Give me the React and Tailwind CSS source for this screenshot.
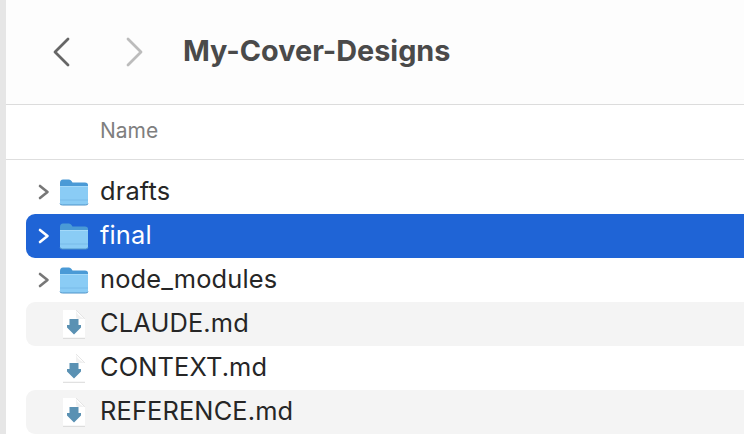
import React from 'react';

const rows = [
  { name: 'drafts', type: 'folder' },
  { name: 'final', type: 'folder', selected: true },
  { name: 'node_modules', type: 'folder' },
  { name: 'CLAUDE.md', type: 'file', striped: true },
  { name: 'CONTEXT.md', type: 'file' },
  { name: 'REFERENCE.md', type: 'file', striped: true },
];

const Chevron = ({ dir, className }) => (
  <svg viewBox="0 0 26 32" className={className} fill="none" stroke="currentColor" strokeWidth="2.8" strokeLinecap="round" strokeLinejoin="round">
    <path d={dir === 'left' ? 'M19 3 L6 16 L19 29' : 'M7 3 L20 16 L7 29'} />
  </svg>
);

const RowChevron = ({ selected }) => (
  <svg viewBox="0 0 12 16" className={`w-[12px] h-[16px] ${selected ? 'text-white' : 'text-[#777777]'}`} fill="none" stroke="currentColor" strokeWidth="2.6" strokeLinecap="round" strokeLinejoin="round">
    <path d="M2 2 L9.5 8 L2 14" />
  </svg>
);

const Folder = () => (
  <svg viewBox="0 0 30 28" className="w-[30px] h-[28px]">
    <path d="M1 5 Q1 1.5 4 1.5 L10 1.5 Q11.5 1.5 12.5 3 L13.5 4.5 L26 4.5 Q29 4.5 29 7 L29 12 L1 12 Z" fill="#4a9ad6" />
    <path d="M1 8 L29 8 L29 24.5 Q29 27 26.5 27 L3.5 27 Q1 27 1 24.5 Z" fill="#8accf5" />
    <path d="M1 8 L29 8 L29 9 L1 9 Z" fill="#a4d9f9" />
    <path d="M1 22 L29 22" stroke="#74b8e6" strokeWidth="0.8" />
    <path d="M1 25.5 Q1 27 3.5 27 L26.5 27 Q29 27 29 25.5" fill="none" stroke="#4f94c9" strokeWidth="1" />
  </svg>
);

const FileIcon = () => (
  <svg viewBox="0 0 24 30" className="w-[24px] h-[30px]">
    <path d="M1 1 L14 1 L23 10 L23 29 L1 29 Z" fill="#ffffff" />
    <path d="M14 1 L23 10" stroke="#dedede" strokeWidth="0.8" fill="none" />
    <path d="M14 1 Q15 7 23 10 L16 10 Q14 10 14 8 Z" fill="#f1f1f1" />
    <path d="M1 29.3 L23 29.3" stroke="#cfcfcf" strokeWidth="0.8" />
    <path d="M7.5 10 L16.5 10 L16.5 16 L19 16 L19 18.5 L12 25.5 L5 18.5 L5 16 L7.5 16 Z" fill="#5a91b3" />
  </svg>
);

const Row = ({ row }) => {
  let bg = '';
  if (row.selected) bg = 'bg-[#1f64d6]';
  else if (row.striped) bg = 'bg-[#f4f4f4]';

  return (
    <div className={`h-[44px] flex items-center rounded-l-[9px] ${bg}`}>
      <div className="w-[33px] flex justify-end pr-[9px] shrink-0 pl-[10px]">
        {row.type === 'folder' && <RowChevron selected={row.selected} />}
      </div>
      <div className="w-[42px] shrink-0 flex">
        {row.type === 'folder' ? <Folder /> : <div className="ml-[3px]"><FileIcon /></div>}
      </div>
      <span className={`text-[25.4px] leading-none tracking-[0.15px] -ml-[1px] -mt-[2px] ${row.selected ? 'text-white' : 'text-[#262626]'}`}>{row.name}</span>
    </div>
  );
};

export default function App() {
  return (
    <div className="w-[744px] h-[434px] overflow-hidden flex bg-white font-['Inter','Liberation_Sans',sans-serif]">
      <div className="w-[6px] shrink-0 bg-[#e6e6e6]" />
      <div className="flex-1 flex flex-col min-w-0">
        <div className="h-[105px] shrink-0 flex items-center border-b border-[#dcdcdc] bg-[#fdfdfd] pl-[43px]">
          <Chevron dir="left" className="w-[26px] h-[32px] text-[#666666]" />
          <Chevron dir="right" className="w-[26px] h-[32px] text-[#bcbcbc] ml-[46px]" />
          <span className="ml-[36px] text-[28.8px] font-bold leading-none -mt-[2px] text-[#4a4a4a]">My-Cover-Designs</span>
        </div>
        <div className="h-[55px] shrink-0 flex items-center border-b border-[#dedede] pl-[95px]">
          <span className="text-[21px] leading-none -mt-[3px] -ml-[1px] text-[#7f7f7f]">Name</span>
        </div>
        <div className="pt-[10px] pl-[20px]">
          {rows.map((row) => (
            <Row key={row.name} row={row} />
          ))}
        </div>
      </div>
    </div>
  );
}
